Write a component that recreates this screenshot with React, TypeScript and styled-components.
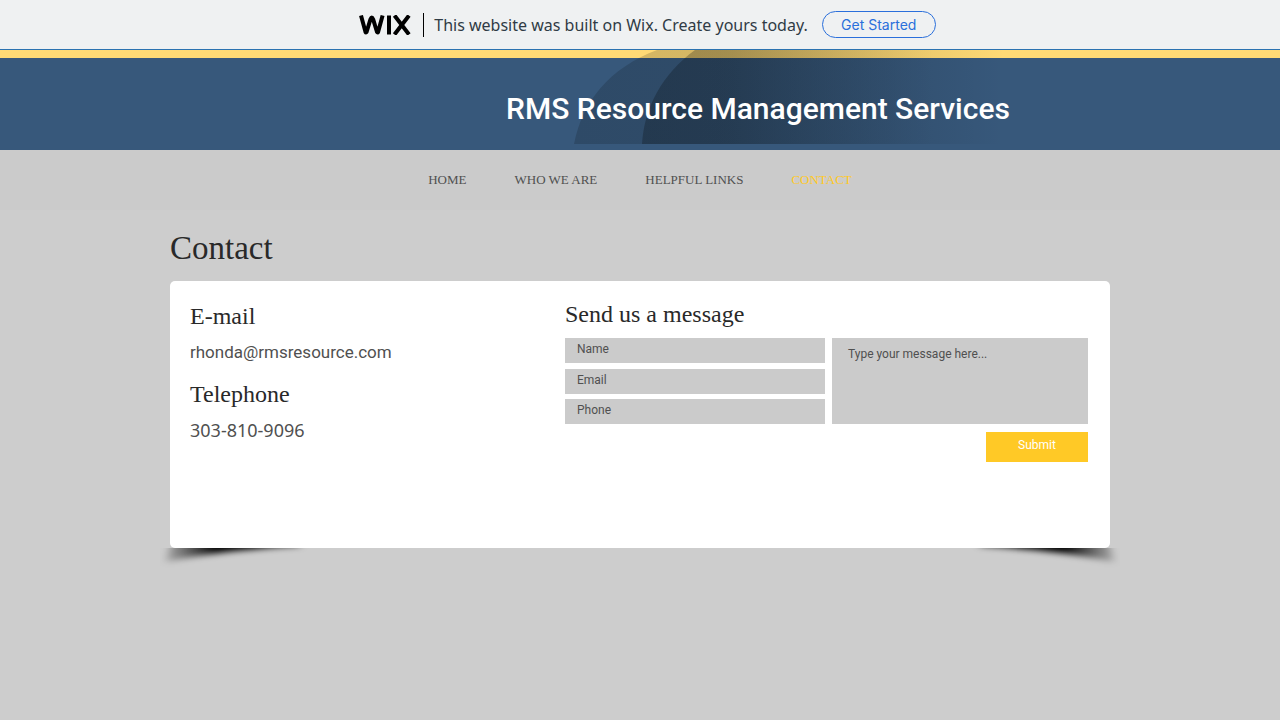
import React from "react";
import styled, { createGlobalStyle } from "styled-components";

const serif = `"Liberation Serif", "DejaVu Serif", serif`;
const sans = `Roboto, "Open Sans", sans-serif`;

const GlobalStyle = createGlobalStyle`
  *, *::before, *::after { box-sizing: border-box; }
  body {
    margin: 0;
    background: #cdcdcd;
    color: #505050;
    font-family: ${sans};
  }
  h1, h2, p { margin: 0; font-weight: 400; }
  a { color: inherit; text-decoration: none; }
`;

const Banner = styled.aside`
  display: flex;
  align-items: center;
  justify-content: center;
  height: 50px;
  background: #eff1f2;
  border-bottom: 1px solid #2b72b0;
  font-family: Inter, sans-serif;
`;

const BannerInner = styled.div`
  display: flex;
  align-items: center;
  margin-left: 15px;
`;

const WixLogo = styled.svg`
  display: block;
  width: 52px;
  height: 20px;
`;

const Divider = styled.span`
  width: 1px;
  height: 24px;
  margin: 0 10px 0 12px;
  background: #000;
`;

const BannerText = styled.p`
  color: #2f3b45;
  font-family: "Noto Sans", sans-serif;
  font-size: 16px;
  line-height: 24px;
  white-space: nowrap;
`;

const BannerLink = styled.a`
  width: 114px;
  height: 27px;
  margin-left: 14px;
  border: 1px solid #2a6fdb;
  border-radius: 14px;
  color: #2a6fdb;
  font-size: 14px;
  line-height: 26px;
  text-align: center;
`;

const Header = styled.header`
  position: relative;
  display: flex;
  justify-content: center;
  height: 100px;
  padding-top: 31px;
  border-top: 8px solid #ffda75;
  background: #37587b;
`;

const Swoosh = styled.svg`
  position: absolute;
  top: -8px;
  left: calc(50% - 66px);
  width: 430px;
  height: 94px;
`;

const SiteTitle = styled.p`
  position: relative;
  margin-left: 236px;
  color: #fff;
  font-size: 30px;
  font-weight: 500;
  line-height: 40px;
  white-space: nowrap;
`;

const Nav = styled.nav`
  display: flex;
  justify-content: center;
  gap: 48px;
  height: 60px;
  background: #cbcbcb;
  font-family: ${serif};
  font-size: 13px;
  line-height: 60px;
`;

const NavLink = styled.a<{ $active?: boolean }>`
  color: ${(p) => (p.$active ? "#ffc926" : "#505050")};
`;

const Main = styled.main`
  max-width: 940px;
  margin: 0 auto;
  padding-top: 16px;
`;

const PageTitle = styled.h1`
  margin-bottom: 11px;
  color: #292929;
  font-family: ${serif};
  font-size: 33px;
  line-height: 44px;
`;

const Card = styled.section`
  display: grid;
  grid-template-columns: 375px 1fr;
  min-height: 267px;
  padding: 18px 22px 20px 20px;
  border-radius: 5px;
  background: #fff;
`;

const Details = styled.div`
  padding-top: 2px;
`;

const Heading = styled.h2`
  color: #292929;
  font-family: ${serif};
  font-size: 24px;
  line-height: 30px;
`;

const Detail = styled.p`
  font-size: 17px;
  line-height: 24px;
  margin: 9px 0 15px;
`;

const PhoneNumber = styled(Detail)`
  font-family: "Noto Sans", sans-serif;
  font-size: 18px;
`;

const Form = styled.form`
  display: grid;
  grid-template-columns: 260px 1fr;
  column-gap: 7px;
  row-gap: 8px;
  align-content: start;
`;

const FormHeading = styled(Heading)`
  grid-column: 1 / -1;
  margin-bottom: 1px;
`;

const Fields = styled.div`
  display: flex;
  flex-direction: column;
  justify-content: space-between;
  height: 86px;
`;

const fieldStyle = `
  width: 100%;
  border: 0;
  border-radius: 0;
  background: #cbcbcb;
  color: #505050;
  font-family: ${sans};
  font-size: 12px;
  line-height: 16px;
  outline-offset: -1px;
  &::placeholder { color: #505050; opacity: 1; }
`;

const Field = styled.input`
  ${fieldStyle}
  height: 25px;
  padding: 0 12px 3px;
`;

const Message = styled.textarea`
  ${fieldStyle}
  display: block;
  height: 86px;
  padding: 8px 16px;
  resize: none;
`;

const Submit = styled.button`
  grid-column: 2;
  justify-self: end;
  width: 102px;
  height: 30px;
  padding: 0 0 4px;
  border: 0;
  background: #ffc926;
  color: #fff;
  font-family: ${sans};
  font-size: 12px;
  line-height: 16px;
  cursor: pointer;
`;

const Shadows = styled.div`
  display: flex;
  justify-content: space-between;
  margin: 0 -10px;
`;

const Shadow = styled.svg<{ $flip?: boolean }>`
  display: block;
  width: 150px;
  height: 24px;
  transform: ${(p) => (p.$flip ? "scaleX(-1)" : "none")};
`;

const pages = ["HOME", "WHO WE ARE", "HELPFUL LINKS", "CONTACT"];

function CornerShadow({ flip }: { flip?: boolean }) {
  const id = flip ? "cornerRight" : "cornerLeft";
  return (
    <Shadow $flip={flip} viewBox="0 0 150 24" aria-hidden="true">
      <defs>
        <linearGradient id={id} gradientUnits="userSpaceOnUse" x1="0" x2="140" y1="0" y2="0">
          <stop offset="0" stopColor="#000" stopOpacity="0.1" />
          <stop offset="0.15" stopColor="#000" stopOpacity="0.4" />
          <stop offset="0.4" stopColor="#000" stopOpacity="1" />
          <stop offset="0.7" stopColor="#000" stopOpacity="1" />
          <stop offset="1" stopColor="#000" stopOpacity="0.7" />
        </linearGradient>
        <filter id={`${id}Blur`} x="-20%" y="-100%" width="140%" height="300%">
          <feGaussianBlur stdDeviation="4 3" />
        </filter>
      </defs>
      <path
        d="M12 -10 L6 14 Q60 2 140 -2 V-10 Z"
        fill={`url(#${id})`}
        filter={`url(#${id}Blur)`}
      />
    </Shadow>
  );
}

export default function App() {
  return (
    <>
      <GlobalStyle />
      <Banner>
        <BannerInner>
          <WixLogo viewBox="0 0 52 20" role="img" aria-label="Wix">
            <g fill="none" stroke="#000" strokeWidth="4" strokeLinejoin="round">
              <path d="M2 0.5 L6.5 17 Q7 18 7.6 17 L11.5 4.2 Q12.8 1 14.1 4.2 L18 17 Q18.6 18 19.1 17 L23.6 0.5" />
              <path d="M30 0.5 V19.5" />
              <path d="M35.5 0.5 L50 19.5 M50 0.5 L35.5 19.5" />
            </g>
          </WixLogo>
          <Divider />
          <BannerText>This website was built on Wix. Create yours today.</BannerText>
          <BannerLink href="#start">Get Started</BannerLink>
        </BannerInner>
      </Banner>
      <Header>
        <Swoosh viewBox="0 0 430 94" aria-hidden="true">
          <defs>
            <linearGradient id="outer" gradientUnits="userSpaceOnUse" x1="0" x2="360" y1="0" y2="0">
              <stop offset="0" stopColor="#060a0c" stopOpacity="0.18" />
              <stop offset="0.4" stopColor="#060a0c" stopOpacity="0.16" />
              <stop offset="1" stopColor="#060a0c" stopOpacity="0" />
            </linearGradient>
            <linearGradient id="inner" gradientUnits="userSpaceOnUse" x1="68" x2="430" y1="0" y2="0">
              <stop offset="0" stopColor="#060a0c" stopOpacity="0.27" />
              <stop offset="0.25" stopColor="#060a0c" stopOpacity="0.25" />
              <stop offset="1" stopColor="#060a0c" stopOpacity="0" />
            </linearGradient>
          </defs>
          <path d="M0 94 C8 52 35 18 83 0 H430 V94 Z" fill="url(#outer)" />
          <path d="M68 94 C70 58 88 24 121 0 H430 V94 Z" fill="url(#inner)" />
        </Swoosh>
        <SiteTitle>RMS Resource Management Services</SiteTitle>
      </Header>
      <Nav>
        {pages.map((page) => (
          <NavLink key={page} href="#" $active={page === "CONTACT"}>
            {page}
          </NavLink>
        ))}
      </Nav>
      <Main>
        <PageTitle>Contact</PageTitle>
        <Card>
          <Details>
            <Heading>E-mail</Heading>
            <Detail>
              <a href="mailto:rhonda@rmsresource.com">rhonda@rmsresource.com</a>
            </Detail>
            <Heading>Telephone</Heading>
            <PhoneNumber>303-810-9096</PhoneNumber>
          </Details>
          <Form onSubmit={(event) => event.preventDefault()}>
            <FormHeading>Send us a message</FormHeading>
            <Fields>
              <Field type="text" aria-label="Name" placeholder="Name" />
              <Field type="email" aria-label="Email" placeholder="Email" />
              <Field type="tel" aria-label="Phone" placeholder="Phone" />
            </Fields>
            <Message aria-label="Message" placeholder="Type your message here..." />
            <Submit type="submit">Submit</Submit>
          </Form>
        </Card>
        <Shadows>
          <CornerShadow />
          <CornerShadow flip />
        </Shadows>
      </Main>
    </>
  );
}
